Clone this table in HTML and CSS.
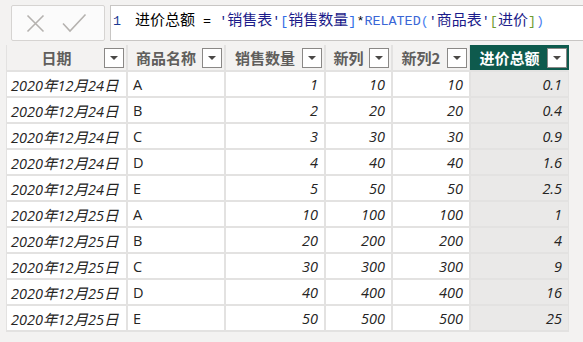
FILE: index.html
```html
<!DOCTYPE html>
<html lang="zh">
<head>
<meta charset="utf-8">
<link rel="stylesheet" href="styles.css">
</head>
<body>
<div class="app">
  <div class="formula-row">
    <div class="actions">
      <svg width="94" height="36" viewBox="0 0 94 36">
        <path d="M16.5 10.5 L32.5 26.5 M32.5 10.5 L16.5 26.5" stroke="#b5b2af" stroke-width="1.6" fill="none"/>
        <path d="M52 18.5 L59 26 L74.5 9.5" stroke="#b5b2af" stroke-width="1.6" fill="none"/>
      </svg>
    </div>
    <div class="formula"><span class="ln">1</span><span class="cj">进价总额</span> = <span class="str">'<span class="cj">销售表</span>'</span><span class="br">[</span><span class="cj col">销售数量</span><span class="br">]</span>*<span class="fn">RELATED</span><span class="pa">(</span><span class="str">'<span class="cj">商品表</span>'</span><span class="gr">[</span><span class="cj col">进价</span><span class="gr">]</span><span class="pa">)</span></div>
  </div>
  <div class="grid">
    <div class="hd c-date"><span class="ht">日期</span><span class="dd"></span></div>
    <div class="hd"><span class="ht">商品名称</span><span class="dd"></span></div>
    <div class="hd"><span class="ht">销售数量</span><span class="dd"></span></div>
    <div class="hd"><span class="ht">新列</span><span class="dd"></span></div>
    <div class="hd"><span class="ht">新列2</span><span class="dd"></span></div>
    <div class="hd hd-sel"><span class="ht">进价总额</span><span class="dd"></span></div>

    <div class="cd date">2020年12月24日</div><div class="cd txt">A</div><div class="cd num">1</div><div class="cd num">10</div><div class="cd num">10</div><div class="cd num sel">0.1</div>
    <div class="cd date">2020年12月24日</div><div class="cd txt">B</div><div class="cd num">2</div><div class="cd num">20</div><div class="cd num">20</div><div class="cd num sel">0.4</div>
    <div class="cd date">2020年12月24日</div><div class="cd txt">C</div><div class="cd num">3</div><div class="cd num">30</div><div class="cd num">30</div><div class="cd num sel">0.9</div>
    <div class="cd date">2020年12月24日</div><div class="cd txt">D</div><div class="cd num">4</div><div class="cd num">40</div><div class="cd num">40</div><div class="cd num sel">1.6</div>
    <div class="cd date">2020年12月24日</div><div class="cd txt">E</div><div class="cd num">5</div><div class="cd num">50</div><div class="cd num">50</div><div class="cd num sel">2.5</div>
    <div class="cd date">2020年12月25日</div><div class="cd txt">A</div><div class="cd num">10</div><div class="cd num">100</div><div class="cd num">100</div><div class="cd num sel">1</div>
    <div class="cd date">2020年12月25日</div><div class="cd txt">B</div><div class="cd num">20</div><div class="cd num">200</div><div class="cd num">200</div><div class="cd num sel">4</div>
    <div class="cd date">2020年12月25日</div><div class="cd txt">C</div><div class="cd num">30</div><div class="cd num">300</div><div class="cd num">300</div><div class="cd num sel">9</div>
    <div class="cd date">2020年12月25日</div><div class="cd txt">D</div><div class="cd num">40</div><div class="cd num">400</div><div class="cd num">400</div><div class="cd num sel">16</div>
    <div class="cd date">2020年12月25日</div><div class="cd txt">E</div><div class="cd num">50</div><div class="cd num">500</div><div class="cd num">500</div><div class="cd num sel">25</div>
  </div>
</div>
</body>
</html>
```
FILE: styles.css
```css
* { box-sizing: border-box; }
html, body { margin: 0; padding: 0; }
body {
  width: 583px;
  height: 342px;
  overflow: hidden;
  background: #f3f2f1;
  font-family: "Open Sans", "Noto Sans CJK SC", sans-serif;
}
.app {
  padding: 5px 0 0 6px;
}
.formula-row {
  display: flex;
  gap: 5px;
  height: 36px;
  margin-left: 5px;
}
.actions {
  width: 94px;
  height: 36px;
  background: #fbfbfb;
  border: 1px solid #d6d4d2;
  border-radius: 2px;
}
.actions svg { display: block; margin: -1px 0 0 -1px; }
.formula {
  flex: 1;
  height: 36px;
  background: #ffffff;
  border: 1px solid #c8c6c4;
  border-right: none;
  padding: 3px 0 0 2px;
  font-family: "Liberation Mono", "Noto Sans CJK SC", monospace;
  font-size: 13.4px;
  line-height: 20px;
  white-space: nowrap;
  color: #000000;
}
.formula .ln { color: #1b3a93; margin-right: 14px; }
.formula .cj { font-family: "Noto Sans CJK SC", sans-serif; font-size: 15px; }
.formula .str { color: #1b1b8a; }
.formula .col { color: #1b1b8a; }
.formula .br { color: #2f6de6; }
.formula .fn { color: #3a66d6; }
.formula .pa { color: #4b7ff0; }
.formula .gr { color: #6f9a2f; }

.grid {
  margin-top: 4px;
  width: 563px;
  display: grid;
  grid-template-columns: 119px 96px 98px 65px 76px 97px;
  grid-template-rows: 25px repeat(10, 24px);
  gap: 2px;
  padding: 0 2px 2px 1px;
  background: #e3e2e1;
}
.hd {
  background: #f3f2f1;
  display: flex;
  align-items: center;
  padding: 0 2px 0 4px;
  font-family: "Noto Sans CJK SC", sans-serif;
  font-weight: 700;
  font-size: 15px;
  color: #605e5c;
}
.hd-sel {
  background: #0e5a4d;
  color: #ffffff;
  margin: 0 -1px 0 -1px;
}
.ht { flex: 1; text-align: center; line-height: 20px; padding-right: 2px; }
.dd {
  width: 20px;
  height: 20px;
  background: #ffffff;
  border: 1px solid #8a8886;
  position: relative;
}
.dd::after {
  content: "";
  position: absolute;
  left: 5px;
  top: 7px;
  border-left: 4px solid transparent;
  border-right: 4px solid transparent;
  border-top: 4px solid #4a4846;
}
.cd {
  background: #ffffff;
  font-size: 14.5px;
  color: #252423;
  display: flex;
  align-items: center;
  white-space: nowrap;
  padding: 0 6px;
}
.date { font-style: italic; padding-left: 4px; }
.txt { padding-left: 5px; }
.num { font-style: italic; justify-content: flex-end; padding-right: 6px; }
.sel { background: #eae9e8; }
```
